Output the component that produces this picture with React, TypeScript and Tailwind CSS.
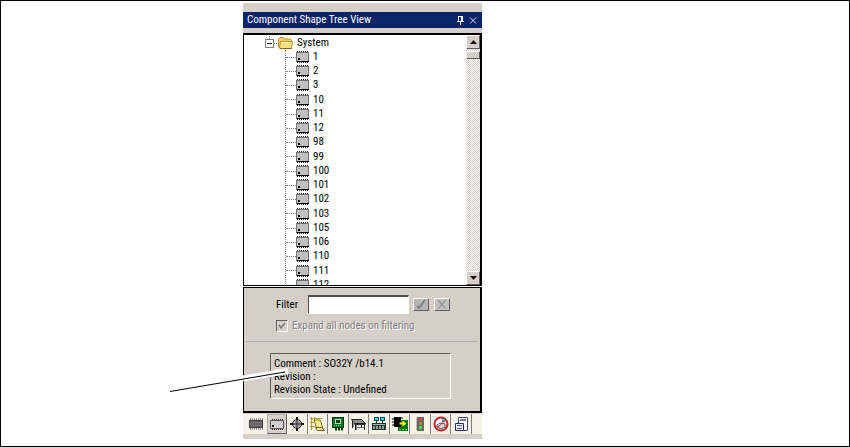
import { ReactNode } from 'react';
import clsx from 'clsx';

const shapes = [
  '1', '2', '3', '10', '11', '12', '98', '99', '100',
  '101', '102', '103', '105', '106', '110', '111', '112',
];

function ChipIcon() {
  return (
    <svg width="13" height="12" viewBox="0 0 13 12" shapeRendering="crispEdges" className="shrink-0">
      <path d="M1 .5h12M1 11.5h12" stroke="#222" strokeDasharray="1 1" />
      <rect x="0" y="1" width="13" height="10" fill="#707070" />
      <rect x="1" y="2" width="11" height="8" fill="#c0c0c0" />
      <path d="M1 10.5h12" stroke="#000" />
      <rect x="2" y="7" width="2" height="2" fill="#000" />
    </svg>
  );
}

function FolderIcon() {
  return (
    <svg width="15" height="12" viewBox="0 0 15 12" className="shrink-0">
      <path d="M.5 10V2.500L2 .500h3.500L7 2h5.500l1 1.500V10z" fill="#f3cf62" stroke="#b98a24" />
      <path d="M2.500 4.500h12l-1 7H1.500z" fill="#fbdf7c" stroke="#c4942c" />
      <path d="M3.500 5.500h10" stroke="#fff8d8" />
      <path d="M2 11.500h12" stroke="#8a6414" />
    </svg>
  );
}

interface Tool {
  name: string;
  divider?: boolean;
  icon: ReactNode;
}

const tools: Tool[] = [
  {
    name: 'Package',
    icon: (
      <>
        <path d="M2 3.500h13M2 12.500h13" stroke="#8a8a8a" strokeWidth="3" strokeDasharray="1 1" />
        <rect x="1" y="4" width="14" height="8" fill="#3c3c3c" />
        <rect x="2" y="5" width="12" height="6" fill="#6b6b6b" />
      </>
    ),
  },
  {
    name: 'Component shape',
    icon: (
      <>
        <path d="M3 3.500h11M3 13.500h11" stroke="#333" strokeDasharray="1 1" />
        <rect x="1" y="4" width="14" height="9" rx="1" fill="#555" />
        <rect x="2" y="5" width="12" height="7" fill="#d0d0d0" />
        <rect x="3" y="9" width="2" height="2" fill="#000" />
      </>
    ),
  },
  {
    name: 'Fiducial',
    divider: true,
    icon: (
      <>
        <circle cx="8" cy="8" r="4.500" fill="#a8a8a8" stroke="#222" />
        <path d="M7 1h2v3H7zM7 12h2v3H7zM1 7h3v2H1zM12 7h3v2h-3z" fill="#111" />
        <path d="M8 3v10M3 8h10" stroke="#222" />
      </>
    ),
  },
  {
    name: 'Feeder tape',
    divider: true,
    icon: (
      <>
        <path d="M2.500 1v13M5.500 1v5M1 2.500h12M1 6.500h4M1 10.500h5" stroke="#b69a24" />
        <path d="M5 4h6l1 2 2 7H8L6 7z" fill="#f3e274" stroke="#8c7512" />
        <path d="M7 6h4M8 8h4M9 10h3" stroke="#fffbd0" />
        <path d="M6.500 11.500h6l3 3h-7z" fill="#fff3a2" stroke="#6a5e18" />
      </>
    ),
  },
  {
    name: 'Board',
    divider: true,
    icon: (
      <>
        <rect x="2" y="1" width="12" height="11" fill="#003800" />
        <rect x="3" y="2" width="10" height="9" fill="#087832" />
        <rect x="5" y="3" width="6" height="5" fill="#bfe2b4" />
        <rect x="6" y="4" width="4" height="3" fill="#043c10" />
        <path d="M4 9.500h8" stroke="#6ecb63" strokeDasharray="1 1" />
        <path d="M5 13h9" stroke="#063b0c" strokeWidth="3" strokeDasharray="2 1" />
      </>
    ),
  },
  {
    name: 'Table',
    divider: true,
    icon: (
      <>
        <path d="M1.500 3.500h10l4 4h-11z" fill="#909090" stroke="#222" />
        <path d="M4.500 8.500h11" stroke="#333" />
        <path d="M2.500 5v7M5.500 8v6M14.500 8v6M11.500 9v3" stroke="#222" />
        <path d="M3.500 6v5M6.500 9v5" stroke="#888" />
        <path d="M6 11.500h8" stroke="#777" />
      </>
    ),
  },
  {
    name: 'Machine',
    divider: true,
    icon: (
      <>
        <rect x="3" y="1" width="5" height="4" fill="#064b59" />
        <rect x="9" y="1" width="5" height="4" fill="#064b59" />
        <path d="M4 3h3M10 3h3" stroke="#2de0ee" strokeWidth="2" />
        <path d="M5.500 5v3M11.500 5v3" stroke="#222" />
        <rect x="1" y="7" width="14" height="7" fill="#26352f" />
        <path d="M2 8.500h12" stroke="#a9b8b1" />
        <path d="M2 11.500h12" stroke="#8d9b94" strokeWidth="3" strokeDasharray="2 1" />
      </>
    ),
  },
  {
    name: 'Export board',
    divider: true,
    icon: (
      <>
        <rect x="6" y="4" width="10" height="11" fill="#06761b" />
        <path d="M7 13.500h8" stroke="#64c84a" strokeDasharray="2 1" />
        <rect x="2" y="1" width="7" height="10" fill="#000" />
        <path d="M0 3h2M0 6h2M0 9h2M9 2h2" stroke="#000" />
        <path d="M7.500 6.500h3v-2l4 3-4 3v-2h-3z" fill="#f7f116" />
      </>
    ),
  },
  {
    name: 'Status',
    divider: true,
    icon: (
      <>
        <rect x="5" y="1" width="7" height="14" fill="#6b6862" />
        <path d="M4.500 2v12" stroke="#bbb" />
        <rect x="7" y="2" width="3" height="3" fill="#c8483c" />
        <rect x="7" y="6" width="3" height="3" fill="#9c8d3c" />
        <rect x="7" y="10" width="3" height="3" fill="#34e356" />
      </>
    ),
  },
  {
    name: 'Excluded parts',
    divider: true,
    icon: (
      <>
        <circle cx="8" cy="8" r="6.500" fill="#fff" stroke="#c91f26" strokeWidth="2" />
        <path d="M4 9l3-2 5 1v3l-4 2-4-2z" fill="#ddd" stroke="#555" />
        <rect x="9" y="3" width="3" height="3" fill="#19bccb" />
        <path d="M12.500 4l-9 8.500" stroke="#c91f26" />
      </>
    ),
  },
  {
    name: 'Report',
    divider: true,
    icon: (
      <>
        <path d="M5.500 1.500h9v13h-9z" fill="#fff" stroke="#41466e" />
        <path d="M7 4h6" stroke="#7278a4" strokeWidth="2" />
        <path d="M2.500 7.500h8v7h-8z" fill="#e7e9f5" stroke="#23295e" />
        <path d="M4 9.500h5M4 12.500h5" stroke="#525a90" />
      </>
    ),
  },
];

const bevel = 'border border-t-white border-l-white border-r-[#606060] border-b-[#606060] bg-[#d4d0c8]';
const sunken = 'border border-t-[#606060] border-r-white border-b-white border-l-[#606060]';

function TitleBar() {
  return (
    <header className="mt-[9px] mb-[5px] flex h-4 items-center bg-[#0a246a] px-1 text-white">
      <h1 className="flex-1">Component Shape Tree View</h1>
      <button type="button" aria-label="Pin" className="mr-1">
        <svg width="9" height="9" viewBox="0 0 9 9" shapeRendering="crispEdges" className="block">
          <path d="M2 .5h5M2.500 0v5M5.500 0v5M6.500 0v5M1 5.500h7M4.500 6v3" stroke="#fff" fill="none" />
        </svg>
      </button>
      <button type="button" aria-label="Close">
        <svg width="9" height="9" viewBox="0 0 9 9" className="block">
          <path d="M1 1.500l6 6M7 1.500l-6 6" stroke="#d8def0" />
        </svg>
      </button>
    </header>
  );
}

function ScrollBar() {
  return (
    <div className="flex w-[14px] shrink-0 flex-col bg-[repeating-conic-gradient(#d4d0c8_0_25%,#fff_0_50%)] bg-[length:2px_2px]">
      <button type="button" aria-label="Scroll up" className={clsx('flex h-[14px] items-center justify-center', bevel)}>
        <svg width="7" height="4" viewBox="0 0 7 4"><path d="M0 4l3.500-4L7 4z" /></svg>
      </button>
      <div className={clsx('mt-[2px] h-2', bevel)} />
      <button type="button" aria-label="Scroll down" className={clsx('mt-auto flex h-[14px] items-center justify-center', bevel)}>
        <svg width="7" height="4" viewBox="0 0 7 4"><path d="M0 0l3.500 4L7 0z" /></svg>
      </button>
    </div>
  );
}

function ShapeTree() {
  return (
    <div className="flex min-h-0 flex-1 border-t-2 border-r-2 border-b border-l border-black bg-white">
      <div className="min-w-0 flex-1 overflow-hidden pt-px pl-[21px]">
        <div className="flex h-[14px] items-center">
          <button type="button" aria-label="Collapse System">
            <svg width="9" height="14" viewBox="0 0 9 14" shapeRendering="crispEdges" className="block">
              <path d="M4.500 0v3" stroke="#808080" strokeDasharray="1 1" />
              <path d="M.5 3.500h8v8h-8z" fill="#fff" stroke="#808080" />
              <path d="M2 7.500h5" stroke="#000" />
            </svg>
          </button>
          <span className="mr-px w-[3px] border-t border-dotted border-[#808080]" />
          <FolderIcon />
          <span className="ml-1">System</span>
        </div>
        <ul className="ml-5 border-l border-dotted border-[#808080]">
          {shapes.map((shape) => (
            <li key={shape} className="flex h-[14px] items-center nth-[4n]:h-[15px]">
              <span className="w-[10px] border-t border-dotted border-[#808080]" />
              <ChipIcon />
              <span className="ml-1">{shape}</span>
            </li>
          ))}
        </ul>
      </div>
      <ScrollBar />
    </div>
  );
}

function FilterPanel() {
  return (
    <div className="border-t border-r-2 border-b-2 border-l border-black pb-3">
      <div className="flex h-8 items-center pt-px pl-8">
        <label htmlFor="filter" className="w-8">Filter</label>
        <input
          id="filter"
          type="text"
          className="h-[19px] w-[101px] border border-t-2 border-t-[#505050] border-r-white border-b-white border-l-[#505050] bg-white px-1 outline-none"
        />
        <button type="button" disabled aria-label="Apply filter" className="ml-1 h-[13px] w-4 border border-t-white border-r-[#606060] border-b-[#606060] border-l-white bg-[#b4b4b4]">
          <svg width="14" height="11" viewBox="0 0 14 11" className="block">
            <path d="M3 7l2 2 6-8" fill="none" stroke="#777" strokeWidth="1.500" />
          </svg>
        </button>
        <button type="button" disabled aria-label="Clear filter" className="ml-[5px] h-[13px] w-4 border border-t-white border-r-[#606060] border-b-[#606060] border-l-white bg-[#c0c0c0]">
          <svg width="14" height="11" viewBox="0 0 14 11" className="block">
            <path d="M3.500 1.500l7 8M10.500 1.500l-7 8" stroke="#777" />
          </svg>
        </button>
      </div>
      <label className="flex h-3 items-center pl-8 text-[#808080] [text-shadow:1px_1px_#fff]">
        <input type="checkbox" defaultChecked disabled className={clsx('h-3 w-3 appearance-none', sunken)} />
        <svg width="8" height="8" viewBox="0 0 8 8" className="mr-[2px] -ml-[10px]">
          <path d="M1 3l2 3 4-5" fill="none" stroke="#777" strokeWidth="1.500" />
        </svg>
        <span className="ml-1">Expand all nodes on filtering</span>
      </label>
      <hr className="mx-[2px] mt-[9px] mb-[11px] border-[#b0b4b8]" />
      <div className={clsx('relative mx-[26px] h-[46px] w-[181px] px-[3px] pt-[3px] leading-[13px]', sunken)}>
        <p>Comment : SO32Y /b14.1</p>
        <p>Revision :</p>
        <p>Revision State : Undefined</p>
        <svg width="124" height="30" viewBox="0 0 124 30" className="absolute top-[12px] -left-[104px]">
          <path d="M76 12.500L121 5" stroke="#fff" strokeWidth="6" />
          <path d="M3 25.500L118 6" stroke="#000" />
        </svg>
      </div>
    </div>
  );
}

function ToolStrip() {
  return (
    <nav className="mt-px mb-[5px] grid h-5 grid-cols-11 bg-[#f5f2e8] pr-[10px] pl-[3px]">
      {tools.map((tool, i) => (
        <button
          key={tool.name}
          type="button"
          aria-label={tool.name}
          className={clsx(
            'flex items-center justify-center',
            tool.divider && 'border-r border-[#808080]',
            i === 1 && 'border border-t-[#b0b0b0] border-r-[#606060] border-b-[#606060] border-l-[#b0b0b0] bg-[#d4d0c8]',
          )}
        >
          <svg width="16" height="16" viewBox="0 0 16 16" fill="none" className="shrink-0">
            {tool.icon}
          </svg>
        </button>
      ))}
    </nav>
  );
}

export default function App() {
  return (
    <main className="grid h-screen min-h-80 grid-cols-[242fr_239px_367fr] grid-rows-[minmax(0,1fr)] border border-black bg-white pt-[2px] pb-[7px] font-['Roboto_Condensed','Roboto','Liberation_Sans',sans-serif] text-[11px] leading-[14px] text-black">
      <section className="col-start-2 flex min-h-0 flex-col bg-[#d4d0c8]">
        <TitleBar />
        <ShapeTree />
        <div className="h-px bg-white" />
        <FilterPanel />
        <ToolStrip />
      </section>
    </main>
  );
}
